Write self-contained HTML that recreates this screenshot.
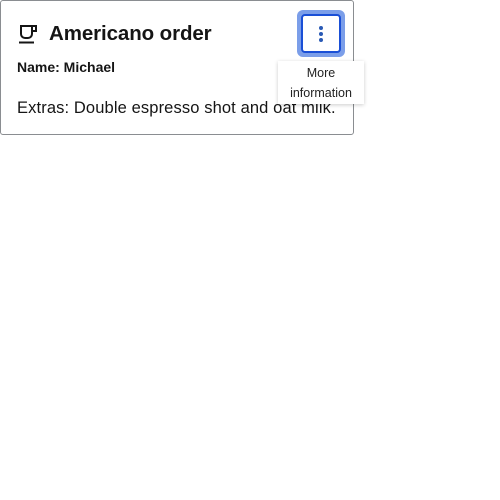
<!DOCTYPE html>
<html><head><style>
body{margin:0;width:500px;height:500px;background:#fff;font-family:"Liberation Sans",sans-serif;color:#151515;position:relative}
.card{position:absolute;left:0;top:0;width:352px;height:133px;border:1px solid #8a8d91;border-radius:3px}
.t{position:absolute;left:49px;top:22px;font-size:20.5px;font-weight:bold;letter-spacing:-0.1px}
.n{position:absolute;left:17px;top:59px;font-size:14px;font-weight:bold}
.e{position:absolute;left:17px;top:99px;font-size:16.5px;letter-spacing:0.12px}
.ring{position:absolute;left:297px;top:10px;width:48px;height:47px;border-radius:6px;background:#7b9ee9}
.btn{position:absolute;left:301px;top:14px;width:36px;height:35px;border:2px solid #1a4fd6;border-radius:4px;background:#fff}
.dot{position:absolute;left:16px;width:4px;height:4px;border-radius:50%;background:#2a5ab5}
.tip{position:absolute;left:278px;top:61px;width:86px;height:43px;background:#fff;box-shadow:0 1px 4px rgba(0,0,0,.2);font-size:12.5px;text-align:center;line-height:20px;padding-top:2px;box-sizing:border-box;color:#222}
</style></head><body>
<div class="card"></div>
<svg style="position:absolute;left:18px;top:24px" width="21" height="20" viewBox="0 0 21 20" fill="none" stroke="#151515" stroke-width="2"><path d="M3 2h11v8a4 4 0 0 1-4 4H7a4 4 0 0 1-4-4z"/><path d="M14 2h4v5h-4"/><path d="M1 18.5h15"/></svg>
<div class="t">Americano order</div>
<div class="n">Name: Michael</div>
<div class="e">Extras: Double espresso shot and oat milk.</div>
<div class="ring"></div>
<div class="btn"><div class="dot" style="top:10px"></div><div class="dot" style="top:16px"></div><div class="dot" style="top:22px"></div></div>
<div class="tip">More<br>information</div>
</body></html>
